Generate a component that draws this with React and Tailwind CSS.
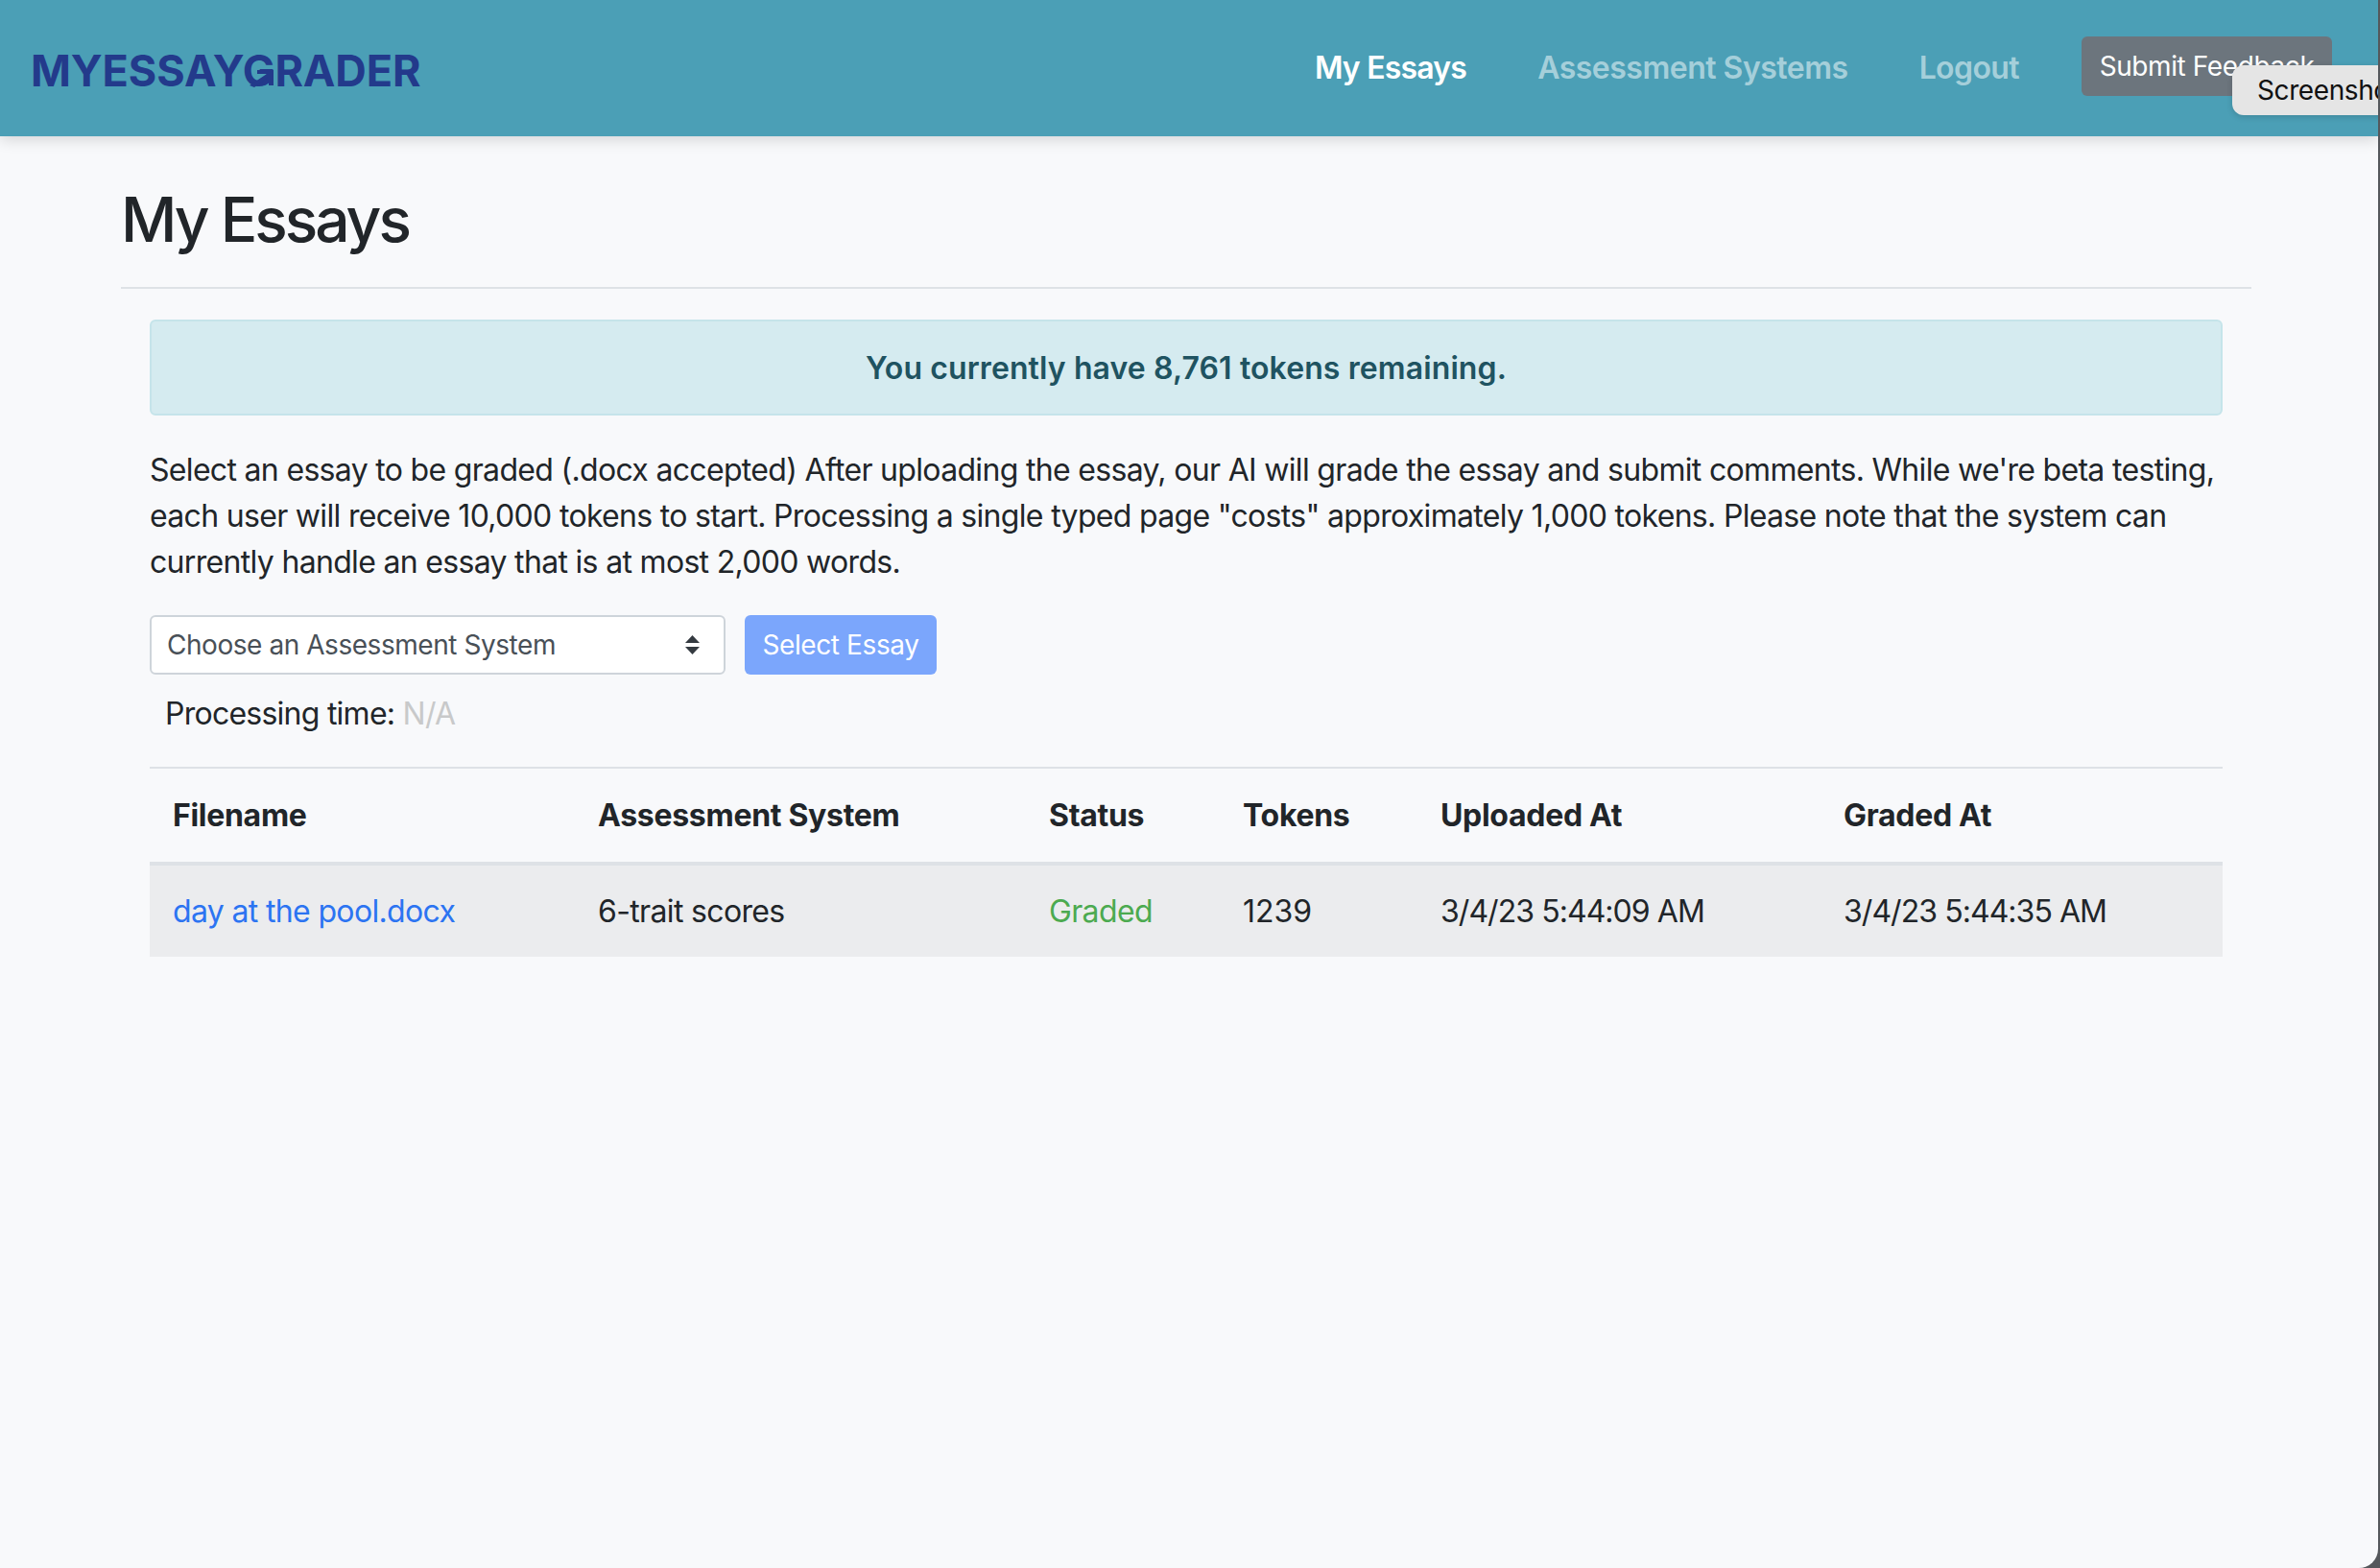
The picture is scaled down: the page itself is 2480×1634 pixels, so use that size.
import React from 'react';

const Logo = () => (
  <a href="#" className="relative mt-[4px] ml-[32px] block w-[408px] text-[45px] leading-[45px] font-bold tracking-[-0.1px] whitespace-nowrap text-[#233a8b]">
    MYESSAYGRADER
    {/* arrow inside the G */}
    <svg className="absolute top-[20px] left-[228px]" width="26" height="20" viewBox="0 0 26 20">
      <path d="M0 18L18 6H8V2h17v16h-5V9L5 20z" fill="#233a8b" />
    </svg>
  </a>
);

const Navbar = () => (
  <nav className="relative z-10 flex h-[142px] items-center bg-[#4b9fb6] shadow-[0_4px_14px_rgba(0,0,0,0.14)]">
    <Logo />
    <div className="ml-auto flex items-center">
      <a href="#" className="text-[32px] font-semibold tracking-[-0.8px] text-white">My Essays</a>
      <a href="#" className="ml-[74px] text-[32px] font-semibold tracking-[-0.5px] text-[#a5cfda]">Assessment Systems</a>
      <a href="#" className="ml-[74px] text-[32px] font-semibold tracking-[-0.6px] text-[#a5cfda]">Logout</a>
      <button className="mt-[-4px] mr-[48px] ml-[65px] h-[62px] w-[261px] rounded-[6px] bg-[#6c757d] text-[28px] tracking-[-0.4px] text-white">
        Submit Feedback
      </button>
    </div>
    {/* screenshot tab laid over the button */}
    <div className="absolute top-[68px] left-[2326px] flex h-[52px] w-[200px] items-center rounded-l-[12px] bg-[#e5e5e5] pl-[26px] text-[28px] tracking-[-0.4px] text-[#111] shadow-[0_2px_6px_rgba(0,0,0,0.15)]">
      Screenshot
    </div>
  </nav>
);

const Notice = () => (
  <div className="rounded-[6px] border-2 border-[#c5e4ea] bg-[#d5ebf0] pt-[25px] pb-[23px] text-center font-semibold tracking-[0.1px] text-[#1f5361]">
    You currently have 8,761 tokens remaining.
  </div>
);

const UploadRow = () => (
  <div className="mt-[31px] flex items-center gap-[20px]">
    <div className="relative w-[600px]">
      <select className="h-[62px] w-full appearance-none rounded-[6px] border-2 border-[#ced4da] bg-white pl-[16px] text-[28px] tracking-[-0.45px] text-[#495057]">
        <option>Choose an Assessment System</option>
      </select>
      <svg className="absolute top-[21px] right-[26px]" width="17" height="20" viewBox="0 0 17 20">
        <path d="M8.5 0L16 8H1zM1 12h15l-7.5 8z" fill="#343a40" />
      </svg>
    </div>
    <button className="h-[62px] w-[200px] rounded-[6px] bg-[#7ba6fc] text-[28px] tracking-[-0.4px] text-white">
      Select Essay
    </button>
  </div>
);

const EssayTable = () => (
  <table className="w-full table-fixed border-t-2 border-[#dee2e6]">
    <colgroup>
      <col className="w-[443px]" />
      <col className="w-[470px]" />
      <col className="w-[202px]" />
      <col className="w-[206px]" />
      <col className="w-[420px]" />
      <col />
    </colgroup>
    <thead>
      <tr className="h-[100px] border-b-4 border-[#dee2e6] text-left tracking-[-0.3px]">
        <th className="px-[24px] font-bold">Filename</th>
        <th className="px-[24px] font-bold">Assessment System</th>
        <th className="px-[24px] font-bold">Status</th>
        <th className="px-[24px] font-bold">Tokens</th>
        <th className="px-[24px] font-bold">Uploaded At</th>
        <th className="px-[24px] font-bold">Graded At</th>
      </tr>
    </thead>
    <tbody>
      <tr className="h-[97px] bg-[#ebecee] tracking-[-0.65px]">
        <td className="px-[24px]"><a href="#" className="text-[#2c74f2]">day at the pool.docx</a></td>
        <td className="px-[24px]">6-trait scores</td>
        <td className="px-[24px] text-[#4caa50]">Graded</td>
        <td className="px-[24px] tracking-[0px]">1239</td>
        <td className="px-[24px] tracking-[-0.95px]">3/4/23 5:44:09 AM</td>
        <td className="px-[24px] tracking-[-0.95px]">3/4/23 5:44:35 AM</td>
      </tr>
    </tbody>
  </table>
);

export default function App() {
  return (
    <div className="flex h-[1634px] w-[2480px] overflow-hidden bg-[#55585c] text-[32px] leading-[48px] text-[#212529] [font-family:Inter,sans-serif]">
      <div className="relative h-full w-[2478px] overflow-hidden rounded-br-[20px] bg-[#f8f9fb]">
        <Navbar />
        <main className="ml-[126px] w-[2220px]">
          <h1 className="pt-[48px] pb-[32px] text-[64px] leading-[77px] font-medium tracking-[-3px]">My Essays</h1>
          <div className="border-t-2 border-[#dee2e6] px-[30px] pt-[32px]">
            <Notice />
            <p className="mt-[33px] mb-0 tracking-[-0.68px]">
              Select an essay to be graded (.docx accepted) After uploading the essay, our AI will grade the essay and submit comments. While we're beta testing, each user will receive 10,000 tokens to start. Processing a single typed page "costs" approximately 1,000 tokens. Please note that the system can currently handle an essay that is at most 2,000 words.
            </p>
            <UploadRow />
            <div className="mt-[17px] mb-[31px] pl-[16px] tracking-[-0.75px]">
              Processing time: <span className="text-[#c8c9ca]">N/A</span>
            </div>
            <EssayTable />
          </div>
        </main>
      </div>
    </div>
  );
}
